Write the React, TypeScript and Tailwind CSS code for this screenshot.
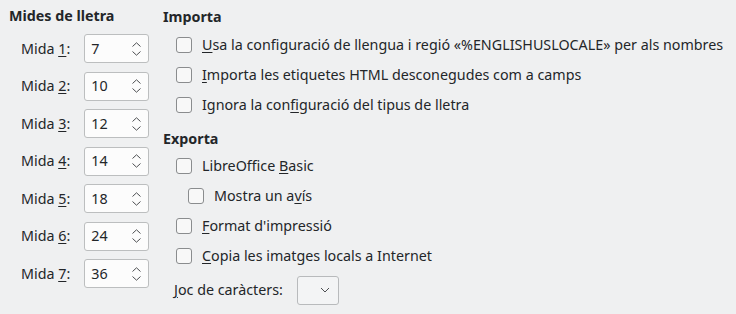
import React from "react";

const sizes = [
  { n: "1", v: "7" },
  { n: "2", v: "10" },
  { n: "3", v: "12" },
  { n: "4", v: "14" },
  { n: "5", v: "18" },
  { n: "6", v: "24" },
  { n: "7", v: "36" },
];

function SpinArrows() {
  return (
    <svg width="11" height="14" viewBox="0 0 11 14" className="absolute right-[6px] top-1/2 -translate-y-1/2">
      <path d="M1.5 4.5 L5.5 0.8 L9.5 4.5" fill="none" stroke="#4d4f52" strokeWidth="1" />
      <path d="M1.5 9.5 L5.5 13.2 L9.5 9.5" fill="none" stroke="#4d4f52" strokeWidth="1" />
    </svg>
  );
}

function SpinBox({ value }: { value: string }) {
  return (
    <div className="relative flex h-[29px] w-[65px] items-center rounded-[3px] border border-[#bcbebf] bg-[#fcfcfc] pl-[6px]">
      <span>{value}</span>
      <SpinArrows />
    </div>
  );
}

function Check({ children, indent = false }: { children: React.ReactNode; indent?: boolean }) {
  return (
    <div className={indent ? "flex h-[30px] items-center pl-[25px]" : "flex h-[30px] items-center pl-[13px]"}>
      <div className="h-[16px] w-[16px] rounded-[3px] border border-[#8a8c8e] bg-[#f8f8f8]" />
      <span className="ml-[10px]">{children}</span>
    </div>
  );
}

export default function App() {
  return (
    <div
      className="flex h-[314px] w-[736px] bg-[#eff0f1] pt-[6px] pl-[9px] text-[14.3px] leading-[20px] text-[#232629]"
      style={{ fontFamily: '"Noto Sans", "Open Sans", sans-serif' }}
    >
      <div className="w-[140px] shrink-0">
        <div className="font-bold">Mides de lletra</div>
        <div className="mt-[8px] flex flex-col gap-[8.5px]">
          {sizes.map((s) => (
            <div key={s.n} className="flex h-[29px] items-center pl-[12px]">
              <span className="whitespace-nowrap">
                Mida <u className="underline-offset-2">{s.n}</u>:
              </span>
              <div className="ml-[14px]">
                <SpinBox value={s.v} />
              </div>
            </div>
          ))}
        </div>
      </div>

      <div className="ml-[14px] flex-1 whitespace-nowrap">
        <div className="pt-[1px] font-bold">Importa</div>
        <div className="mt-[3px]">
          <Check>
            <u className="underline-offset-2">U</u>sa la configuració de llengua i regió «%ENGLISHUSLOCALE» per als nombres
          </Check>
          <Check>
            <u className="underline-offset-2">I</u>mporta les etiquetes HTML desconegudes com a camps
          </Check>
          <Check>
            Ignora la con<u className="underline-offset-2">f</u>iguració del tipus de lletra
          </Check>
        </div>

        <div className="mt-[9px] font-bold">Exporta</div>
        <div className="mt-[2px]">
          <Check>
            LibreOffice <u className="underline-offset-2">B</u>asic
          </Check>
          <Check indent>
            Mostra un a<u className="underline-offset-2">v</u>ís
          </Check>
          <Check>
            <u className="underline-offset-2">F</u>ormat d'impressió
          </Check>
          <Check>
            <u className="underline-offset-2">C</u>opia les imatges locals a Internet
          </Check>
        </div>

        <div className="mt-[4.5px] flex h-[29px] items-center pl-[11px]">
          <span>
            <u className="underline-offset-2">J</u>oc de caràcters:
          </span>
          <div className="ml-[14px] flex h-[29px] w-[42px] items-center justify-end rounded-[3px] border border-[#b8babc] bg-[#f3f4f5] pr-[8px]">
            <svg width="10" height="6" viewBox="0 0 10 6">
              <path d="M1 1 L5 5 L9 1" fill="none" stroke="#4d4f52" strokeWidth="1" />
            </svg>
          </div>
        </div>
      </div>
    </div>
  );
}
